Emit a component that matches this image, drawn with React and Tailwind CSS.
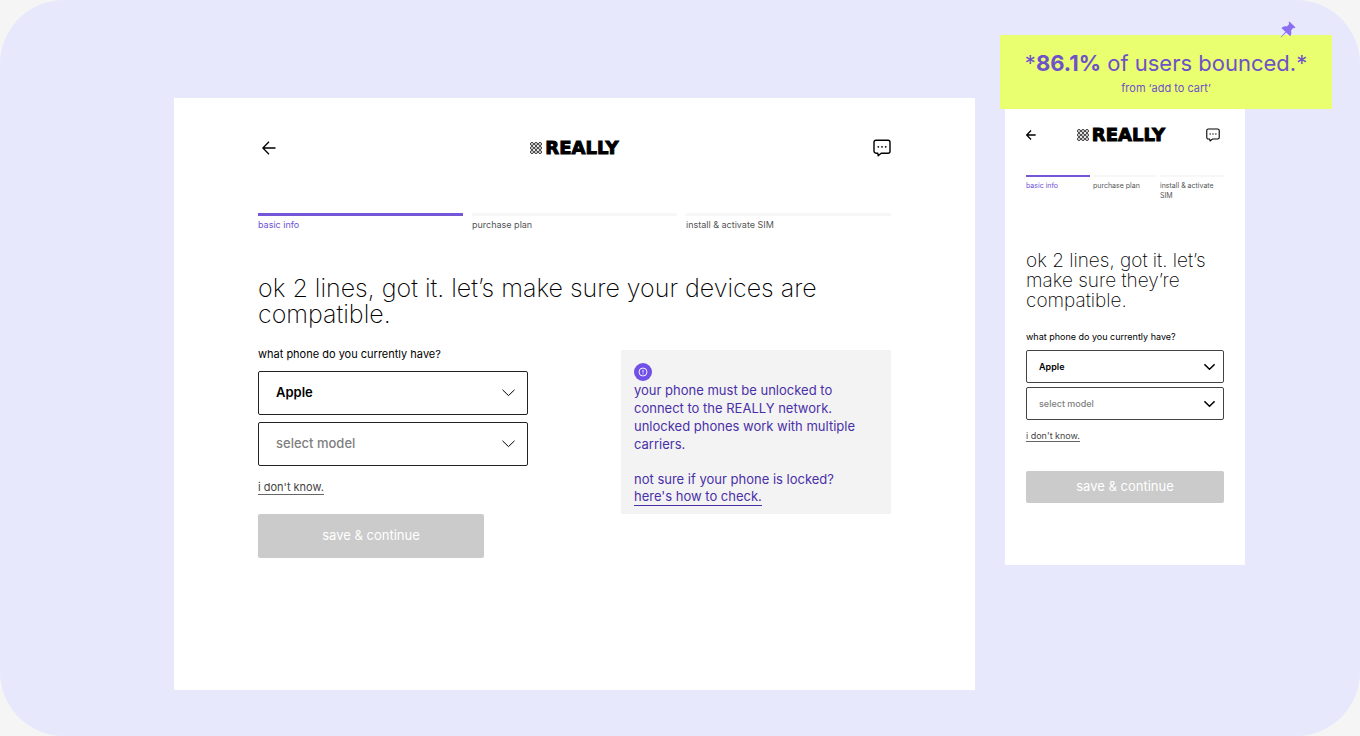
import React, { useState } from 'react';

const ArrowLeft = ({ className, strokeWidth = 1.3 }) => (
  <svg className={className} viewBox="0 0 14 14" fill="none" stroke="currentColor" aria-hidden="true">
    <path d="M13.5 7H1M7 0.8L0.9 7L7 13.2" strokeWidth={strokeWidth} />
  </svg>
);

const ChatIcon = ({ className }) => (
  <svg className={className} viewBox="0 0 18 18" fill="none" aria-hidden="true">
    <path
      d="M3 1.2h12a2 2 0 0 1 2 2v9a2 2 0 0 1-2 2H8.2L5.2 16.7L4.8 14.2H3a2 2 0 0 1-2-2v-9a2 2 0 0 1 2-2z"
      stroke="currentColor"
      strokeWidth="1.4"
      strokeLinejoin="round"
    />
    <circle cx="5.3" cy="7.8" r="0.9" fill="currentColor" />
    <circle cx="9" cy="7.8" r="0.9" fill="currentColor" />
    <circle cx="12.7" cy="7.8" r="0.9" fill="currentColor" />
  </svg>
);

const PinIcon = ({ className }) => (
  <svg className={className} viewBox="0 0 16 17" fill="currentColor" aria-hidden="true">
    <path d="M9.3 0.6L15.4 6.3L14.5 7.2L13 7L11 9.7C11.7 11.6 11.4 13.6 10.2 15.2L6.2 11.4L1 16.6L0.5 16.2L5.4 10.7L1.4 6.9C3 5.4 4.9 5 6.9 5.4L9.2 3L8.6 1.4Z" />
  </svg>
);

const dots = [2, 6, 10];

const Logo = () => (
  <div className="flex items-center gap-[3px] text-black">
    <svg className="size-3" viewBox="0 0 12 12" fill="none" stroke="currentColor" aria-hidden="true">
      {dots.map((y) => dots.map((x) => <circle key={`${x}-${y}`} cx={x} cy={y} r="1.5" strokeWidth="0.8" />))}
    </svg>
    <span className="font-['DejaVu_Sans',sans-serif] text-[18px] leading-4 font-bold [-webkit-text-stroke:1px_black]">
      REALLY
    </span>
  </div>
);

const SelectField = ({ label, value, onChange, options, compact, placeholder }) => (
  <div className="relative">
    <select
      aria-label={label}
      value={value}
      onChange={(e) => onChange(e.target.value)}
      className={`block w-full appearance-none rounded-xs border bg-white ${
        compact ? 'h-[33px] border-[#444] px-3 text-[9px]' : 'h-11 border-[#222] px-[17px] text-[13px]'
      } ${placeholder ? 'font-medium text-[#808080]' : 'font-semibold text-black'}`}
    >
      {options.map((option) => (
        <option key={option}>{option}</option>
      ))}
    </select>
    <svg
      className={`pointer-events-none absolute top-1/2 -translate-y-1/2 ${
        compact ? 'right-[9px] h-[7px] w-[11px]' : 'right-[13px] h-2 w-[13px]'
      }`}
      viewBox="0 0 13 8"
      fill="none"
      stroke="black"
      aria-hidden="true"
    >
      <path d="M0.5 0.8L6.5 6.6L12.5 0.8" strokeWidth={compact ? 1.7 : 1} />
    </svg>
  </div>
);

const Steps = ({ compact }) => (
  <ol className={`grid grid-cols-3 ${compact ? 'gap-[3px] text-[7px] leading-[10px]' : 'gap-[9px] text-[9px] leading-3'}`}>
    {['basic info', 'purchase plan', 'install & activate SIM'].map((step, i) => (
      <li key={step} className={i === 0 ? 'text-[#6c50d8]' : 'text-[#555]'}>
        <div className={`${compact ? 'mb-1 h-0.5' : 'mb-[3px] h-[3px]'} ${i === 0 ? 'bg-[#7456d8]' : 'bg-[#f7f7f8]'}`} />
        {step}
      </li>
    ))}
  </ol>
);

const brands = ['Apple', 'Google', 'Samsung'];
const models = ['select model', 'iPhone 13', 'iPhone 14'];

const DesktopScreen = () => {
  const [brand, setBrand] = useState('Apple');
  const [model, setModel] = useState('select model');

  return (
    <section className="min-h-[592px] min-w-0 flex-1 bg-white px-[84px] pt-[41px]">
      <header className="flex items-center justify-between">
        <button type="button" aria-label="Back" className="pl-1">
          <ArrowLeft className="size-3.5" />
        </button>
        <Logo />
        <button type="button" aria-label="Chat">
          <ChatIcon className="size-[18px]" />
        </button>
      </header>
      <div className="mt-14">
        <Steps />
      </div>
      <h1 className="mt-11 text-[25px] leading-[26px] font-extralight text-black">
        ok 2 lines, got it. let’s make sure your devices are compatible.
      </h1>
      <div className="mt-[19px] flex items-start justify-between">
        <form className="w-[270px]" onSubmit={(e) => e.preventDefault()}>
          <p className="text-[11px] leading-4">what phone do you currently have?</p>
          <div className="mt-[9px] grid gap-[7px]">
            <SelectField label="Phone brand" value={brand} onChange={setBrand} options={brands} />
            <SelectField
              label="Phone model"
              value={model}
              onChange={setModel}
              options={models}
              placeholder={model === 'select model'}
            />
          </div>
          <div className="mt-3.5 flex">
            <a href="#unknown" className="border-b border-[#666] text-[11px] leading-[14px] text-[#444]">
              i don't know.
            </a>
          </div>
          <button type="submit" className="mt-[19px] h-11 w-[226px] rounded-xs bg-[#cbcbcb] text-[13px] text-white">
            save & continue
          </button>
        </form>
        <aside className="mt-1 w-[270px] bg-[#f3f3f3] px-[13px] pt-[13px] pb-2 text-[13px] leading-[18px] text-[#4930a8]">
          <div className="flex size-[18px] items-center justify-center rounded-full bg-[#7050e6]">
            <svg className="size-[10px]" viewBox="0 0 10 10" fill="none" stroke="white" aria-hidden="true">
              <circle cx="5" cy="5" r="4" strokeWidth="0.9" />
              <path d="M5 2.8V5.5M5 6.3V7.3" strokeWidth="0.9" />
            </svg>
          </div>
          <p>
            your phone must be unlocked to connect to the REALLY network. unlocked phones work with multiple carriers.
          </p>
          <p className="mt-[17px]">not sure if your phone is locked?</p>
          <div className="flex">
            <a href="#check" className="border-b border-[#4930a8] leading-[17px]">
              here's how to check.
            </a>
          </div>
        </aside>
      </div>
    </section>
  );
};

const MobileScreen = () => {
  const [brand, setBrand] = useState('Apple');
  const [model, setModel] = useState('select model');

  return (
    <section className="min-h-[467px] bg-white px-[21px] pt-[29px]">
      <header className="flex items-center justify-between pr-1">
        <button type="button" aria-label="Back">
          <ArrowLeft className="size-2.5" strokeWidth={1.8} />
        </button>
        <Logo />
        <button type="button" aria-label="Chat">
          <ChatIcon className="size-3.5" />
        </button>
      </header>
      <div className="mt-8">
        <Steps compact />
      </div>
      <h2 className="mt-[50px] text-[19px] leading-5 font-extralight text-black">
        ok 2 lines, got it. let’s make sure they’re compatible.
      </h2>
      <form onSubmit={(e) => e.preventDefault()}>
        <p className="mt-5 text-[9px] leading-3">what phone do you currently have?</p>
        <div className="mt-[7px] grid gap-1">
          <SelectField compact label="Phone brand" value={brand} onChange={setBrand} options={brands} />
          <SelectField
            compact
            label="Phone model"
            value={model}
            onChange={setModel}
            options={models}
            placeholder={model === 'select model'}
          />
        </div>
        <div className="mt-2.5 flex">
          <a href="#unknown" className="border-b border-[#666] text-[9px] leading-[11px] text-[#444]">
            i don't know.
          </a>
        </div>
        <button type="submit" className="mt-[29px] h-8 w-full rounded-xs bg-[#cbcbcb] text-[13px] text-white">
          save & continue
        </button>
      </form>
    </section>
  );
};

const BounceNote = () => (
  <div className="absolute -top-[63px] -left-[5px] w-[332px] bg-[#e9ff70] pt-3.5 pb-[13px] text-center text-[#6f51c9]">
    <p className="text-[22px] leading-7">
      *<strong className="font-bold">86.1%</strong> of users bounced.*
    </p>
    <p className="mt-[3px] text-[11px] leading-4">from ‘add to cart’</p>
    <PinIcon className="absolute -top-3.5 right-9 h-[17px] w-4 text-[#8b6ff0]" />
  </div>
);

const App = () => {
  return (
    <div className="min-h-screen bg-[#f5f5f5] font-['Inter',sans-serif]">
      <main className="flex min-h-screen items-start gap-[30px] rounded-[64px] bg-[#e7e8fb] pt-[98px] pr-[115px] pb-[46px] pl-[174px]">
        <DesktopScreen />
        <div className="relative w-60 shrink-0">
          <MobileScreen />
          <BounceNote />
        </div>
      </main>
    </div>
  );
};

export default App;
